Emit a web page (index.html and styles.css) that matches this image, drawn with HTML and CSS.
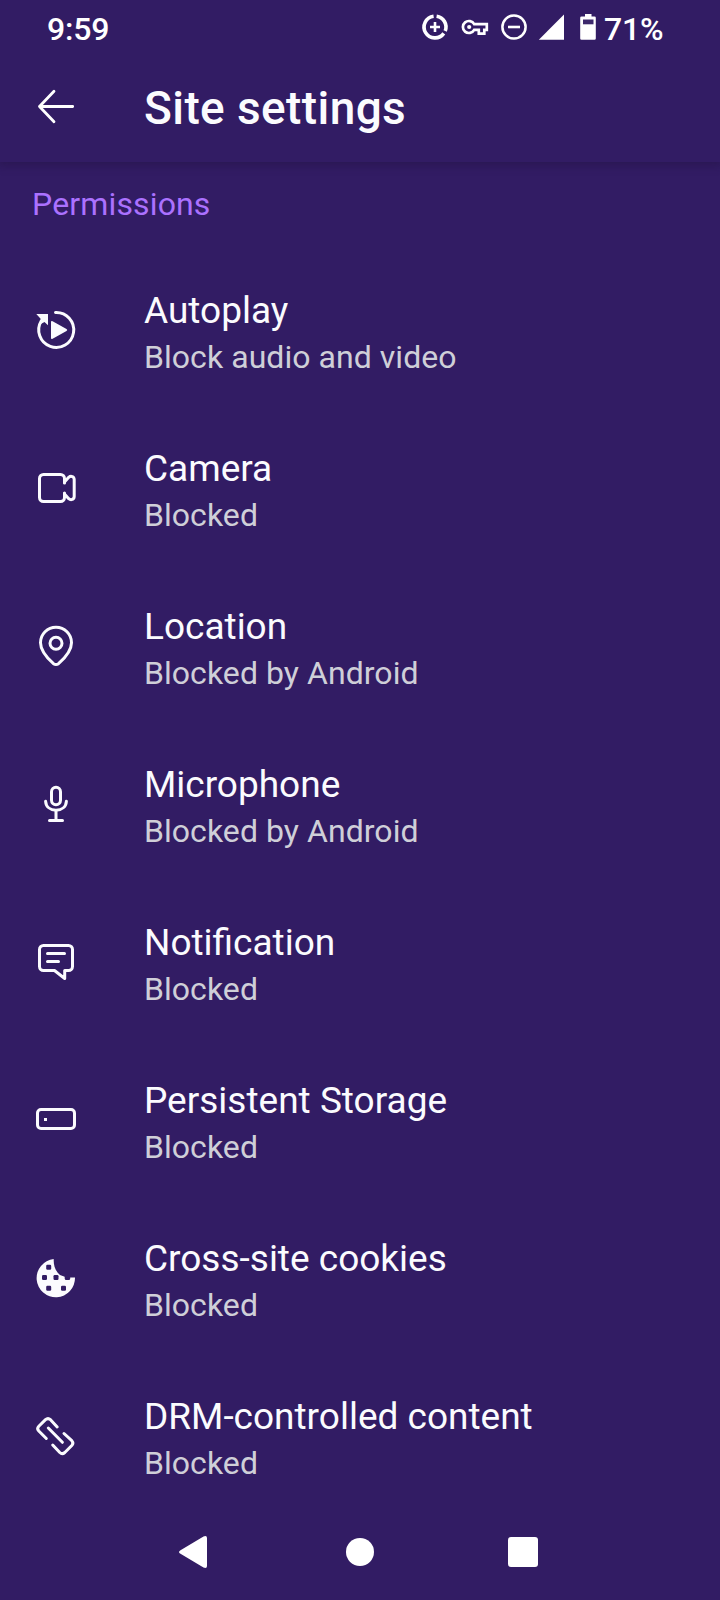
FILE: index.html
```html
<!DOCTYPE html>
<html lang="en">
<head>
<meta charset="utf-8">
<title>Site settings</title>
<link rel="stylesheet" href="styles.css">
</head>
<body>
<header class="top">
  <div class="status">
    <span class="clock">9:59</span>
    <svg class="indicators" width="200" height="54" viewBox="400 0 200 54" aria-hidden="true">
      <g fill="none" stroke="#fff">
        <path d="M433.600 16.200A10.900 10.900 0 1 0 443.800 33.400M436.600 16.200A10.900 10.900 0 0 1 445.200 31" stroke-width="3.600"/>
        <path d="M435 22v10M430 27h10" stroke-width="2.600"/>
        <path d="M474.200 24.200H486.800V29.800H484.300V33.700H478.800V29.800H474.200A6 6 0 1 1 474.200 24.200Z" stroke-width="2.700"/>
        <circle cx="469.200" cy="27" r="2.100" fill="#fff" stroke="none"/>
        <circle cx="514" cy="27" r="11.600" stroke-width="2.500"/>
        <path d="M508 27h12" stroke-width="2.600"/>
      </g>
      <path d="M564 14.500V39.700H538.800Z" fill="#fff"/>
      <path d="M585 14h6.500v2.500h3q1.300 0 1.300 1.300V38.500q0 1.300-1.300 1.300h-13q-1.300 0-1.300-1.300V17.800q0-1.300 1.300-1.300H585Z" fill="#fff"/>
      <path d="M583 19.500h10.500v4.800h-10.500z" fill="#3c286c"/>
    </svg>
    <span class="battery">71%</span>
  </div>
  <div class="toolbar">
    <svg class="back" width="48" height="48" viewBox="0 0 48 48" fill="none" stroke="#fff" stroke-width="2.800" stroke-linecap="round" stroke-linejoin="round"><path d="M22 9.200 7.500 24.500 22 39.800M7.500 24.500H40.700"/></svg>
    <h1 class="title">Site settings</h1>
  </div>
</header>
<main class="list">
  <h2 class="section">Permissions</h2>
  <div class="row">
    <svg class="icon" viewBox="0 0 48 48"><path d="M23.500 6.500A17.500 17.500 0 1 1 9.200 15"/><path class="solid" d="M4.300 8H16V19.300L12.500 16 8.300 18.200 8.600 12.800Z"/><path class="solid" d="M19 16.200q0-1.800 1.600-.9L34.500 23q1.600 1 0 2L20.600 32.700q-1.600.9-1.600-.9Z"/></svg>
    <div><div class="name">Autoplay</div><div class="state">Block audio and video</div></div>
  </div>
  <div class="row">
    <svg class="icon" viewBox="0 0 48 48"><path d="M32.500 19V14.500a4 4 0 0 0-4-4H11.500a4 4 0 0 0-4 4V33.500a4 4 0 0 0 4 4H28.500a4 4 0 0 0 4-4V29"/><path d="M32.500 18 36.700 13.300Q38 12.200 39.600 12.400 42.200 13 42.200 15.500V32.500Q42.200 35 39.600 35.600 38 35.800 36.700 34.700L32.500 30"/><path class="solid" d="M31 14h3v3l-3 3zM31 34h3v-3l-3-3z"/></svg>
    <div><div class="name">Camera</div><div class="state">Blocked</div></div>
  </div>
  <div class="row">
    <svg class="icon" viewBox="0 0 48 48"><path d="M24 5.200A15.500 15.500 0 0 0 8.500 20.700C8.500 28.500 16 36.800 21.500 41.700Q24 43.400 26.500 41.700C32 36.800 39.500 28.500 39.500 20.700A15.500 15.500 0 0 0 24 5.200Z"/><circle cx="24" cy="21.300" r="6"/></svg>
    <div><div class="name">Location</div><div class="state">Blocked by Android</div></div>
  </div>
  <div class="row">
    <svg class="icon" viewBox="0 0 48 48"><rect x="19.500" y="7.200" width="9" height="17.600" rx="4.500"/><path d="M13.600 21.300C14 26.500 18 30.200 24 30.200S34 26.500 34.400 21.300M24 30.200V40.500M17.500 40.500H30.500"/></svg>
    <div><div class="name">Microphone</div><div class="state">Blocked by Android</div></div>
  </div>
  <div class="row">
    <svg class="icon" viewBox="0 0 48 48"><path d="M11.500 7.500h25a4 4 0 0 1 4 4v17a4 4 0 0 1-4 4h-3.800V40.500L22.500 32.500h-11a4 4 0 0 1-4-4v-17a4 4 0 0 1 4-4ZM15.500 15.500H32.500M15.500 23.500H26.500"/></svg>
    <div><div class="name">Notification</div><div class="state">Blocked</div></div>
  </div>
  <div class="row">
    <svg class="icon" viewBox="0 0 48 48"><rect x="5.500" y="13.500" width="37" height="19" rx="3.500"/><path class="solid" d="M12 22h3v3h-3z"/></svg>
    <div><div class="name">Persistent Storage</div><div class="state">Blocked</div></div>
  </div>
  <div class="row">
    <svg class="icon" viewBox="0 0 48 48"><path class="solid" d="M21.700 5A19.200 19.200 0 1 0 43 23.500H38.200V24.500Q38.200 26 36.700 26H34.200Q32.700 26 32.700 24.500V22.700L28 21C23.500 17 21.500 12 21.700 5Z"/><g class="hole"><rect x="14.200" y="10.800" width="5" height="5" rx="1.200"/><rect x="10" y="21" width="5" height="5" rx="1.200"/><rect x="21.500" y="21" width="5" height="5" rx="1.200"/><rect x="14.200" y="31.800" width="5" height="5" rx="1.200"/><rect x="29" y="31.800" width="5" height="5" rx="1.200"/></g></svg>
    <div><div class="name">Cross-site cookies</div><div class="state">Blocked</div></div>
  </div>
  <div class="row">
    <svg class="icon" viewBox="0 0 48 48"><path d="M14.300 26.500 6.800 19Q4.500 16.500 6.800 14.200L13.500 7.700Q16 5.500 18.500 7.700L25.200 15M16.300 16 30.400 30.300M32 21.500 39.800 28.700Q42 31 39.800 33.500L32.800 40.500Q30.200 42.700 27.800 40.500L20.700 33"/></svg>
    <div><div class="name">DRM-controlled content</div><div class="state">Blocked</div></div>
  </div>
</main>
<nav class="navbar">
  <svg width="34" height="34" viewBox="0 0 34 34"><path d="M2.500 15.200 25.500 1.400Q29 0 29 3V31Q29 34 25.500 32.600L2.500 18.800Q-.5 17 2.500 15.200Z" fill="#fff"/></svg>
  <span class="home"></span>
  <span class="recents"></span>
</nav>
</body>
</html>
```
FILE: styles.css
```css
* { box-sizing: border-box; }
body {
  margin: 0;
  height: 1600px;
  overflow: hidden;
  display: flex;
  flex-direction: column;
  background: #321c64;
  color: #fbfbfe;
  font-family: Roboto, "Liberation Sans", sans-serif;
}
.top { height: 162px; flex: none; box-shadow: 0 2px 8px 2px rgba(32, 18, 60, .4); }
.status {
  height: 54px;
  display: flex;
  align-items: center;
  padding-left: 47px;
  color: #fff;
  font-size: 32px;
  font-weight: 500;
  line-height: 54px;
  letter-spacing: -.2px;
}
.clock { width: 353px; padding-top: 3px; }
.indicators { display: block; flex: none; }
.battery { padding: 3px 0 0 4px; }
.toolbar { height: 108px; display: flex; align-items: center; padding-left: 32px; }
.back { flex: none; margin: -4px 64px 0 0; }
.title { margin: 0; font-size: 46px; font-weight: 500; letter-spacing: .4px; line-height: 52px; }
.list { flex: none; height: 1353px; }
.section {
  margin: 0;
  height: 89px;
  padding: 23px 0 0 32px;
  color: #ab71ff;
  font-size: 32px;
  font-weight: 400;
  line-height: 38px;
  letter-spacing: .15px;
}
.row { height: 158px; display: flex; align-items: center; padding-left: 32px; }
.icon {
  width: 48px;
  height: 48px;
  flex: none;
  margin-right: 64px;
  fill: none;
  stroke: #fbfbfe;
  stroke-width: 3;
  stroke-linecap: round;
  stroke-linejoin: round;
}
.icon .solid { fill: #fbfbfe; stroke: none; }
.icon .hole { fill: #321c64; stroke: none; }
.name { padding-top: 7px; font-size: 37px; line-height: 48px; }
.state { font-size: 32px; line-height: 45px; color: #cfcfd8; letter-spacing: .05px; }
.navbar { height: 85px; display: flex; gap: 134px; align-items: center; padding: 0 0 11px 178px; }
.home { width: 28px; height: 28px; border-radius: 50%; background: #fff; }
.recents { width: 30px; height: 30px; border-radius: 3px; background: #fff; }
```
